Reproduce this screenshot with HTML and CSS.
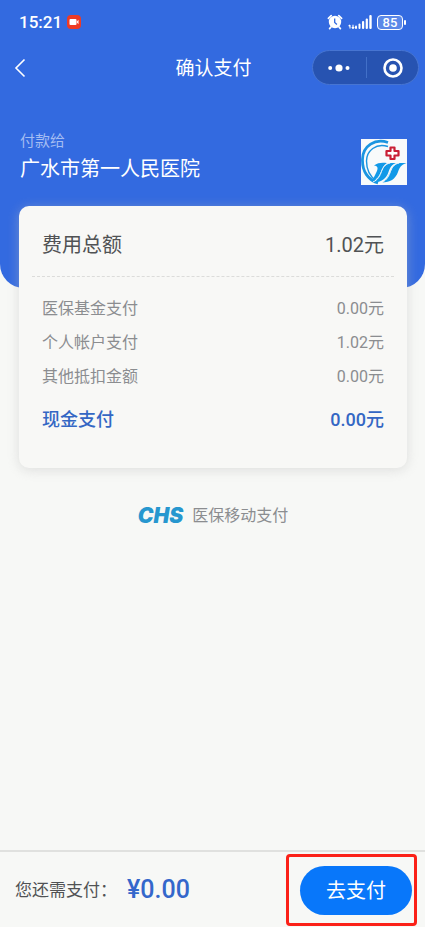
FILE: index.html
```html
<!DOCTYPE html>
<html lang="zh-CN">
<head>
<meta charset="utf-8">
<meta name="viewport" content="width=device-width, initial-scale=1">
<title>确认支付</title>
<link rel="stylesheet" href="styles.css">
</head>
<body>
<header class="hero">
  <div class="status">
    <div class="status-group">
      <span class="clock">15:21</span>
      <svg class="rec" viewBox="0 0 14 14" aria-hidden="true"><rect width="14" height="14" rx="4" fill="#ee3a24"/><rect x="2.5" y="4" width="7" height="6" rx="1" fill="#fff"/><path d="M9.5 7 11.5 4.8v4.4z" fill="#fff"/></svg>
    </div>
    <div class="status-right">
      <svg class="alarm" viewBox="0 0 16 16" aria-hidden="true"><circle cx="8" cy="8" r="6.2" fill="#fff"/><path d="M1.4 4.4 4.2 1.6M14.6 4.4 11.8 1.6M4 13l-1.4 1.6M12 13l1.4 1.6" stroke="#fff" stroke-width="1.7" stroke-linecap="round"/><path d="M7.7 4.6v3.8l2.2 2" fill="none" stroke="#336ae0" stroke-width="1.3"/></svg>
      <svg class="signal" viewBox="0 0 24 14" aria-hidden="true"><path d="M2 10v3.6M.6 11.2 2 9.8M5 9.8v3.6M3.8 12.2 5 13.6l1.2-1.4" fill="none" stroke="#fff" stroke-width="1.1"/><g fill="#fff"><rect x="7" y="10.5" width="2" height="3.5" rx="1"/><rect x="10.5" y="8.5" width="2" height="5.5" rx="1"/><rect x="14" y="6" width="2.2" height="8" rx="1"/><rect x="17.7" y="3.5" width="2.2" height="10.5" rx="1"/><rect x="21.3" y="0" width="2.4" height="14" rx="1"/></g></svg>
      <span class="battery">85</span>
    </div>
  </div>
  <nav class="nav">
    <button class="back" type="button" aria-label="返回"><svg viewBox="0 0 12 20" aria-hidden="true"><path d="M10.5 1.5 2 10l8.500 8.500" fill="none" stroke="#fff" stroke-width="1.6"/></svg></button>
    <h1 class="title">确认支付</h1>
    <div class="capsule">
      <button class="capsule-btn" type="button" aria-label="更多"><svg class="dots" viewBox="0 0 22 8" aria-hidden="true"><g fill="#fff"><circle cx="2.200" cy="4" r="2"/><circle cx="11" cy="4" r="3.600"/><circle cx="19.500" cy="4" r="2"/></g></svg></button>
      <button class="capsule-btn" type="button" aria-label="关闭"><svg class="target" viewBox="0 0 20 20" aria-hidden="true"><circle cx="10" cy="10" r="8.500" fill="none" stroke="#fff" stroke-width="2.600"/><circle cx="10" cy="10" r="3.800" fill="#fff"/></svg></button>
    </div>
  </nav>
  <div class="payee">
    <div>
      <p class="payee-label">付款给</p>
      <p class="payee-name">广水市第一人民医院</p>
    </div>
    <svg class="hospital" viewBox="0 0 46 46" aria-hidden="true">
      <rect width="46" height="46" fill="#f8fafb"/>
      <path d="M27 3.500C14-1 2 7 1.500 20 1 32 7 41 17 44" fill="none" stroke="#1b95e0" stroke-width="2.800"/>
      <path d="M27 7.500C15 3.500 5.500 12 5.500 22c0 9 4 16 10 20" fill="none" stroke="#1b95e0" stroke-width="1.400"/>
      <g fill="#1199e8">
        <path d="M13 26.500c4-3 8-3 13-2.500-3.500 2-4.500 5-6 8.500-2 5-4.500 9-10 9.500 3-3 4-6 5.500-9 1.500-3 2-6-2.500-6.500z"/>
        <path d="M20.500 32c2-5 5-8 10-8H35c-4.500 1.500-6 5-7.500 9C25.500 39 21 43.500 12 43.500c5-3 6.500-7 8.500-11.500z"/>
        <path d="M29.500 32c2-5 5-8 10-8h6c-5.500 1.500-7 5-8.500 9-2.500 7-8 10.500-16 10.500 5-3 6.500-7 8.500-11.500z"/>
      </g>
      <g fill="none" stroke="#f8fafb" stroke-width="1"><path d="M29 24c-5 1-7 4.500-8.500 8.500S17 41 12 43"/><path d="M38 24c-5 1-7 4.500-8.500 8.500S26 41 21 43.500"/></g>
      <path d="M29.500 8.500h4v3.500h4v4.500h-4V20h-4v-3.500h-4V12h4z" fill="#fff" stroke="#c91f35" stroke-width="2.200" stroke-linejoin="round"/>
    </svg>
  </div>
</header>

<main class="main">
  <section class="card">
    <dl class="bill">
      <div class="row row-total"><dt>费用总额</dt><dd>1.02元</dd></div>
      <div class="row"><dt>医保基金支付</dt><dd>0.00元</dd></div>
      <div class="row"><dt>个人帐户支付</dt><dd>1.02元</dd></div>
      <div class="row"><dt>其他抵扣金额</dt><dd>0.00元</dd></div>
      <div class="row row-cash"><dt>现金支付</dt><dd>0.00元</dd></div>
    </dl>
  </section>
  <p class="brand"><span class="chs">CHS</span><span>医保移动支付</span></p>
</main>

<footer class="footer">
  <p class="due"><span>您还需支付：</span><strong class="due-amount">¥0.00</strong></p>
  <div class="highlight"><button class="pay" type="button">去支付</button></div>
</footer>
</body>
</html>
```
FILE: styles.css
```css
* {
  box-sizing: border-box;
}

body,
h1,
p,
dl,
dd {
  margin: 0;
}

body {
  display: flex;
  flex-direction: column;
  min-height: 100vh;
  background: #f7f8f6;
  color: #505254;
  font-family: Roboto, "Noto Sans CJK SC", sans-serif;
  font-size: 16px;
  line-height: 24px;
}

button {
  padding: 0;
  border: 0;
  background: none;
  color: inherit;
  font: inherit;
}

svg {
  display: block;
}

.hero {
  padding-bottom: 104px;
  border-radius: 0 0 24px 24px;
  background: #336ae0;
  color: #fff;
}

.status {
  display: flex;
  align-items: center;
  justify-content: space-between;
  height: 44px;
  padding: 0 22px 0 19px;
}

.status-group,
.status-right {
  display: flex;
  align-items: center;
  gap: 5px;
}

.clock {
  font-size: 17px;
  font-weight: 500;
}

.rec {
  width: 14px;
  height: 14px;
}

.alarm {
  width: 16px;
  height: 16px;
}

.signal {
  width: 24px;
  height: 14px;
}

.battery {
  position: relative;
  width: 26px;
  height: 15px;
  border: 1px solid #fff;
  border-radius: 4px;
  background: #5b88e8;
  font-size: 13px;
  font-weight: 500;
  line-height: 14px;
  text-align: center;
}

.battery::after {
  content: "";
  position: absolute;
  top: 4px;
  right: -4px;
  width: 2px;
  height: 5px;
  border-radius: 1px;
  background: #fff;
}

.nav {
  display: grid;
  grid-template-columns: 1fr auto 1fr;
  align-items: center;
  padding: 6px 6px 0 8px;
}

.back {
  justify-self: start;
  padding: 0 6px;
}

.back svg {
  width: 12px;
  height: 20px;
}

.title {
  padding-top: 2px;
  font-size: 19px;
  font-weight: 400;
}

.capsule {
  display: flex;
  justify-self: end;
  width: 107px;
  height: 35px;
  border: 1px solid #4775d2;
  border-radius: 18px;
  background: #2753b1;
}

.capsule-btn {
  display: flex;
  flex: 1;
  align-items: center;
  justify-content: center;
}

.capsule-btn + .capsule-btn::before {
  content: "";
  width: 1px;
  height: 21px;
  margin-right: 16px;
  background: #4270c8;
}

.capsule-btn + .capsule-btn {
  justify-content: flex-start;
}

.dots {
  width: 22px;
  height: 8px;
}

.target {
  width: 20px;
  height: 20px;
}

.payee {
  display: flex;
  align-items: flex-end;
  justify-content: space-between;
  padding: 44px 18px 0 20px;
}

.payee-label {
  color: #a4bdf2;
  font-size: 15px;
}

.payee-name {
  font-size: 20px;
  line-height: 32px;
}

.hospital {
  width: 46px;
  height: 46px;
}

.hero {
  padding-bottom: 103px;
}

.main {
  flex: 1;
  margin-top: -82px;
  padding: 0 18px 0 19px;
}

.card {
  padding: 11px 13px 31px;
  border-radius: 10px;
  background: #f8f8f6;
  box-shadow: 0 2px 12px rgba(190, 190, 190, 0.45);
}

.row {
  display: flex;
  align-items: center;
  justify-content: space-between;
  padding: 5px 10px;
  color: #8b8d90;
}

.row-total {
  margin-bottom: 15px;
  padding: 16px 10px 19px;
  border-bottom: 1px dashed #dcdcda;
  color: #505254;
  font-size: 20px;
}

.row-cash {
  padding-top: 14px;
  color: #3467c4;
  font-size: 18px;
  font-weight: 500;
}

.brand {
  display: flex;
  align-items: center;
  justify-content: center;
  gap: 9px;
  padding-top: 36px;
  color: #8b8d90;
}

.chs {
  color: #2797cf;
  font-family: Inter, "Liberation Sans", sans-serif;
  font-size: 21px;
  font-style: italic;
  font-weight: 900;
}

.footer {
  display: flex;
  align-items: center;
  justify-content: space-between;
  padding: 2px 8px 1px 15px;
  border-top: 2px solid #e0e1df;
}

.due {
  display: flex;
  align-items: center;
  gap: 10px;
  font-size: 17px;
}

.due-amount {
  color: #3467cb;
  font-size: 25px;
  font-weight: 500;
}

.highlight {
  padding: 9px 2px 8px 11px;
  border: 3px solid #fb2118;
  border-radius: 4px;
}

.pay {
  display: block;
  width: 112px;
  height: 49px;
  border-radius: 25px;
  background: #0877fa;
  color: #fff;
  font-size: 20px;
}
```
